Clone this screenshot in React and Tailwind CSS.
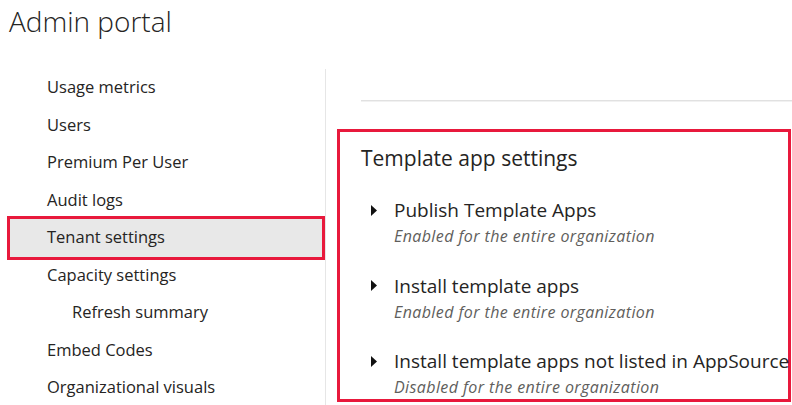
const navItems = [
  { label: "Usage metrics" },
  { label: "Users" },
  { label: "Premium Per User" },
  { label: "Audit logs" },
  { label: "Tenant settings", selected: true },
  { label: "Capacity settings" },
  { label: "Refresh summary", nested: true },
  { label: "Embed Codes" },
  { label: "Organizational visuals" },
];

const settings = [
  { title: "Publish Template Apps", status: "Enabled for the entire organization" },
  { title: "Install template apps", status: "Enabled for the entire organization" },
  {
    title: "Install template apps not listed in AppSource",
    status: "Disabled for the entire organization",
  },
];

function Caret() {
  return (
    <svg width="6" height="11" viewBox="0 0 6 11" className="shrink-0">
      <path d="M0 0 L6 5.5 L0 11 Z" fill="#111" />
    </svg>
  );
}

function NavItem({ item }) {
  if (item.selected) {
    return (
      <div className="ml-[10px] flex h-[37.5px] w-[312px] items-center bg-[#e8e8e8] pl-[37px] outline-[3px] outline-solid outline-[#e8193c]">
        {item.label}
      </div>
    );
  }
  return (
    <div
      className={
        item.nested
          ? "flex h-[37.5px] items-center pl-[72px]"
          : "flex h-[37.5px] items-center pl-[47px]"
      }
    >
      {item.label}
    </div>
  );
}

function SettingRow({ setting }) {
  return (
    <div className="flex flex-col">
      <div className="flex items-center">
        <div className="flex w-[33px] shrink-0 pl-[10px]">
          <Caret />
        </div>
        <span className="whitespace-nowrap text-[19px] leading-[26px] text-[#252423]">
          {setting.title}
        </span>
      </div>
      <div className="mt-[2px] whitespace-nowrap pl-[33px] text-[16px] leading-[22px] tracking-[0.4px] italic text-[#605e5c]">
        {setting.status}
      </div>
    </div>
  );
}

export default function App() {
  return (
    <div
      className="h-[405px] w-[792px] overflow-hidden bg-white text-[#252423]"
      style={{ fontFamily: '"Open Sans", "Noto Sans", sans-serif' }}
    >
      <h1 className="h-[69px] pl-[9px] pt-[2px] text-[28px] leading-[38px] font-light text-[#252423]">
        Admin portal
      </h1>

      <div className="flex">
        <nav className="h-[336px] w-[326px] shrink-0 border-r border-[#e6e6e6] text-[16.5px]">
          {navItems.map((item) => (
            <NavItem key={item.label} item={item} />
          ))}
        </nav>

        <main className="min-w-0 flex-1">
          <div className="ml-[35px] mt-[31px] border-t border-b border-t-[#e1e1e1] border-b-[#f1f1f1]" />
          <section className="ml-[11px] mt-[27px] h-[273px] w-[454px] border-[3px] border-[#e8193c] pl-[21px] pt-[12px]">
            <h2 className="text-[21px] leading-[28px] text-[#252423]">Template app settings</h2>
            <div className="mt-[25px] flex flex-col gap-[25.5px]">
              {settings.map((s) => (
                <SettingRow key={s.title} setting={s} />
              ))}
            </div>
          </section>
        </main>
      </div>
    </div>
  );
}
